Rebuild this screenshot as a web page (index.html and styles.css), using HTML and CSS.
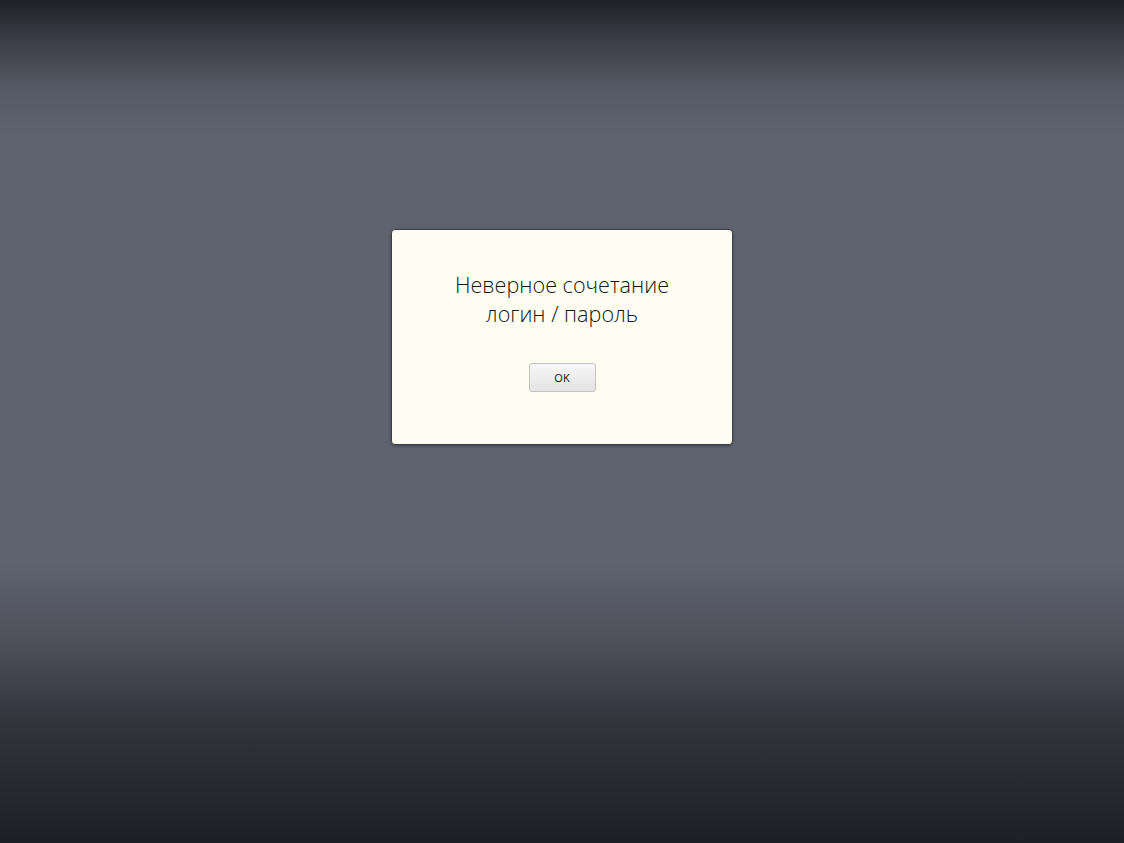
FILE: index.html
```html
<!DOCTYPE html>
<html lang="ru">
<head>
<meta charset="utf-8">
<link rel="stylesheet" href="styles.css">
</head>
<body>
<div class="screen">
  <div class="dialog">
    <p class="message">Неверное сочетание<br>логин / пароль</p>
    <button class="ok">OK</button>
  </div>
</div>
</body>
</html>
```
FILE: styles.css
```css
html, body {
  margin: 0;
  padding: 0;
  height: 100%;
}
body {
  background: linear-gradient(to bottom,
    #1f2126 0px,
    #3b3e47 40px,
    #565a66 90px,
    #5f6370 140px,
    #5f6370 560px,
    #4e515c 640px,
    #33353d 720px,
    #1d1f24 843px);
  font-family: "Open Sans", "Noto Sans", sans-serif;
}
.screen {
  display: flex;
  justify-content: center;
  padding-top: 229px;
}
.dialog {
  width: 340px;
  height: 214px;
  box-sizing: content-box;
  background: #fefdf2;
  border: 1px solid #3d3f46;
  border-radius: 4px;
  display: flex;
  flex-direction: column;
  align-items: center;
  box-shadow: 0 1px 3px rgba(0,0,0,0.35);
}
.message {
  margin: 40px 0 0;
  font-size: 21.6px;
  font-weight: 300;
  line-height: 29px;
  color: #161616;
  text-align: center;
}
.ok {
  margin-top: 35px;
  width: 67px;
  height: 29px;
  border: 1px solid #c4c4c4;
  border-radius: 3px;
  background: linear-gradient(to bottom, #f7f7f7, #e4e4e4);
  font-family: "Open Sans", "Noto Sans", sans-serif;
  font-size: 11px;
  color: #111;
  padding: 0;
}
```
